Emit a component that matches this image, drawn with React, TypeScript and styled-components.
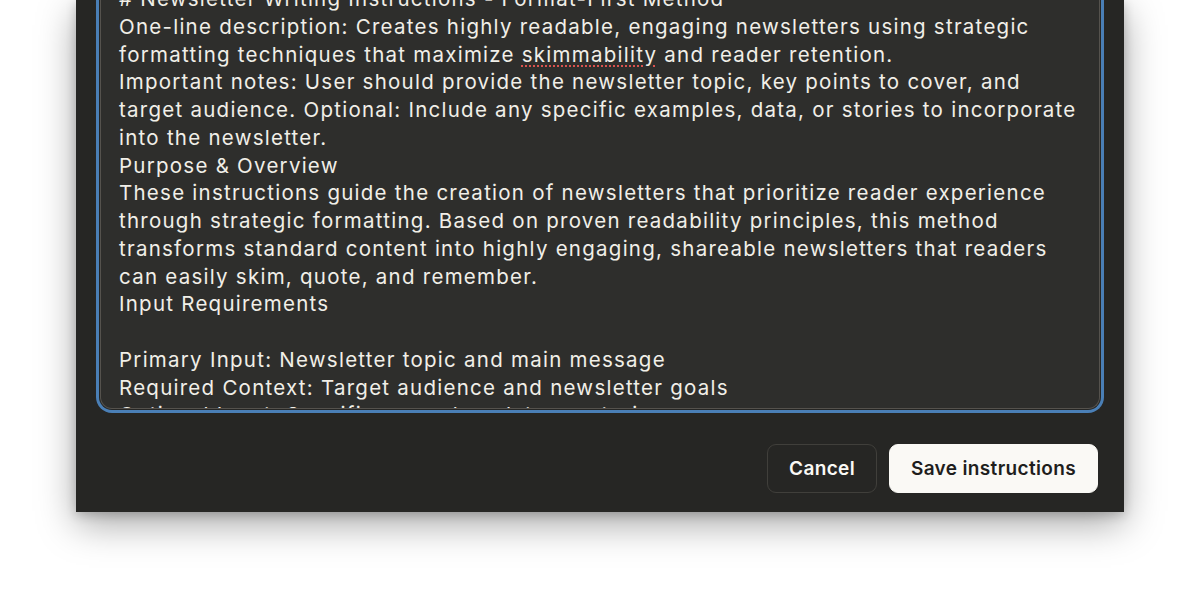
import React, { useEffect, useRef } from "react";
import styled, { createGlobalStyle } from "styled-components";

const Global = createGlobalStyle`
  html, body { margin: 0; padding: 0; background: #ffffff; }
  body { font-family: Inter, "Noto Sans", sans-serif; }
  * { box-sizing: border-box; }
`;

const Page = styled.div`
  width: 1200px;
  height: 600px;
  overflow: hidden;
  display: flex;
  justify-content: center;
  align-items: flex-start;
`;

const Dialog = styled.div`
  width: 1048px;
  background: #262624;
  padding: 0 20px 19px;
  display: flex;
  flex-direction: column;
  gap: 31px;
  box-shadow: 0 12px 36px rgba(0, 0, 0, 0.35), 0 3px 10px rgba(0, 0, 0, 0.2);
`;

const Ring = styled.div`
  border: 3px solid #4a7fb6;
  border-top: none;
  border-radius: 0 0 16px 16px;
  padding: 0 1px 1px;
`;

const Field = styled.div`
  height: 409px;
  background: #2e2e2c;
  border: 1px solid #55524d;
  border-top: none;
  border-radius: 0 0 12px 12px;
  overflow: hidden;
  padding: 0 18px;
`;

const Content = styled.div`
  padding-top: 8px;
  font-family: Inter, "Noto Sans", sans-serif;
  font-size: 20.5px;
  line-height: 27.75px;
  color: #f1efe8;
  white-space: pre;
  letter-spacing: 1.25px;
`;

const Misspelled = styled.span`
  text-decoration: underline dotted #d9534f;
  text-decoration-thickness: 2px;
  text-underline-offset: 4px;
`;

const Footer = styled.div`
  display: flex;
  justify-content: flex-end;
  gap: 12px;
  padding-right: 6px;
`;

const Button = styled.button<{ $primary?: boolean }>`
  height: 49px;
  padding: 0 21px;
  border-radius: 9px;
  font-family: Inter, "Noto Sans", sans-serif;
  font-size: 19px;
  font-weight: 600;
  letter-spacing: 0.35px;
  cursor: pointer;
  border: 1px solid ${(p) => (p.$primary ? "#faf9f5" : "#403f3b")};
  background: ${(p) => (p.$primary ? "#faf9f5" : "#262624")};
  color: ${(p) => (p.$primary ? "#1f1e1d" : "#faf9f5")};
`;

const lines = [
  "# Newsletter Writing Instructions - Format-First Method",
  "One-line description: Creates highly readable, engaging newsletters using strategic",
  null,
  "Important notes: User should provide the newsletter topic, key points to cover, and",
  "target audience. Optional: Include any specific examples, data, or stories to incorporate",
  "into the newsletter.",
  "Purpose & Overview",
  "These instructions guide the creation of newsletters that prioritize reader experience",
  "through strategic formatting. Based on proven readability principles, this method",
  "transforms standard content into highly engaging, shareable newsletters that readers",
  "can easily skim, quote, and remember.",
  "Input Requirements",
  "",
  "Primary Input: Newsletter topic and main message",
  "Required Context: Target audience and newsletter goals",
  "Optional Input: Specific examples, data, or stories",
  "Tone Preference: Casual, professional, or conversational",
];

export default function App() {
  const ref = useRef<HTMLDivElement>(null);
  useEffect(() => {
    if (ref.current) ref.current.scrollTop = 23;
  }, []);
  return (
    <>
      <Global />
      <Page>
        <Dialog>
          <Ring>
            <Field ref={ref}>
              <Content>
                {lines.map((l, i) =>
                  l === null ? (
                    <div key={i}>
                      formatting techniques that maximize <Misspelled>skimmability</Misspelled> and reader retention.
                    </div>
                  ) : (
                    <div key={i}>{l === "" ? "\u00a0" : l}</div>
                  )
                )}
              </Content>
            </Field>
          </Ring>
          <Footer>
            <Button>Cancel</Button>
            <Button $primary>Save instructions</Button>
          </Footer>
        </Dialog>
      </Page>
    </>
  );
}
